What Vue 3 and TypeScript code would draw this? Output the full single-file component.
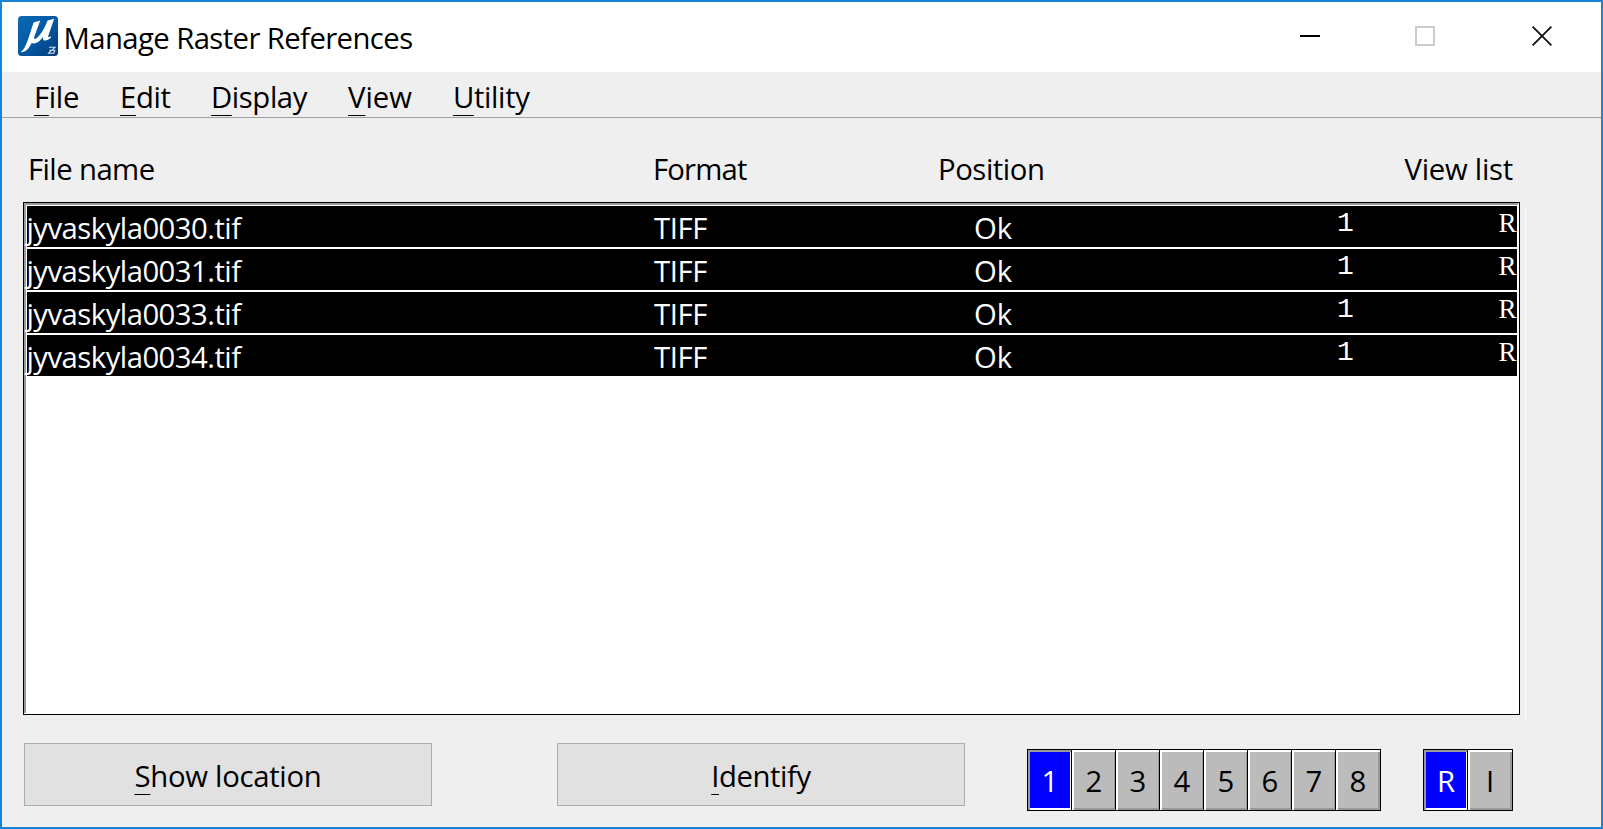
<script setup lang="ts">
import type { Directive } from 'vue'

interface Label {
  key: string
  rest: string
  width: number
}

const menus: Label[] = [
  { key: 'F', rest: 'ile', width: 45 },
  { key: 'E', rest: 'dit', width: 50.5 },
  { key: 'D', rest: 'isplay', width: 96 },
  { key: 'V', rest: 'iew', width: 64 },
  { key: 'U', rest: 'tility', width: 76.5 },
]

const files: string[] = [
  'jyvaskyla0030.tif',
  'jyvaskyla0031.tif',
  'jyvaskyla0033.tif',
  'jyvaskyla0034.tif',
]

const actions: Label[] = [
  { key: 'S', rest: 'how location', width: 187 },
  { key: 'I', rest: 'dentify', width: 99.5 },
]

const views: string[] = ['1', '2', '3', '4', '5', '6', '7', '8']
const modes: string[] = ['R', 'I']

// Tracks a label out or in so that it takes the given advance width.
const vFit: Directive<HTMLElement, number> = {
  mounted(el, binding) {
    const natural = el.getBoundingClientRect().width
    const count = (el.textContent ?? '').length
    el.style.letterSpacing = `${(binding.value - natural) / count}px`
  },
}
</script>

<template>
  <div class="window">
    <header class="titlebar">
      <svg class="logo" width="40" height="40" viewBox="0 0 40 40">
        <defs>
          <linearGradient id="logo-fill" x1="0" y1="0" x2="1" y2="1">
            <stop offset="0" stop-color="#0a6ab4" />
            <stop offset="0.5" stop-color="#0459a3" />
            <stop offset="1" stop-color="#043c7c" />
          </linearGradient>
        </defs>
        <rect width="40" height="40" rx="3.5" fill="url(#logo-fill)" />
        <path d="M15.6 6.4 22.2 4.6 16.4 20.5C15.6 23 16.6 23.6 18.6 22.2 22.8 19.2 27 11.4 29.6 4.6L36.2 2.8 30.4 19.4C29.8 21.4 30.4 21.6 32.8 20.2L33 21.4C29.8 24.8 24 26.4 25 20.9 21.8 25.4 17 28.8 13.6 27 10.8 33 7.2 36.6 2.6 36.2 6.4 33.4 9 26.6 11 20.4Z" fill="#fff" />
        <path d="M31 31.2H37L34 34.2H36.8L35.8 37.2H30.6L33.6 34.2H31.4" fill="none" stroke="#d4e0ee" stroke-width="1.1" />
      </svg>
      <h1 class="title"><span v-fit="349">Manage Raster References</span></h1>
      <div class="controls">
        <svg width="20" height="20" viewBox="0 0 20 20"><path d="M0 10H20" stroke="#000" stroke-width="2" /></svg>
        <svg width="20" height="20" viewBox="0 0 20 20"><rect x="1" y="1" width="18" height="18" fill="none" stroke="#ccc" stroke-width="2" /></svg>
        <svg width="20" height="20" viewBox="0 0 20 20"><path d="M.6 .6 19.4 19.4M19.4 .6 .6 19.4" stroke="#111" stroke-width="1.8" /></svg>
      </div>
    </header>

    <nav class="menubar">
      <div v-for="m in menus" :key="m.key" class="menu">
        <span v-fit="m.width"><u>{{ m.key }}</u>{{ m.rest }}</span>
      </div>
    </nav>

    <div class="headings">
      <div><span v-fit="126.5">File name</span></div>
      <div><span v-fit="93.5">Format</span></div>
      <div><span v-fit="106.5">Position</span></div>
      <div><span v-fit="108.5">View list</span></div>
    </div>

    <div class="list-area">
      <div class="list">
        <div class="well">
          <div v-for="f in files" :key="f" class="row">
            <div class="name"><span v-fit="214">{{ f }}</span></div>
            <div><span v-fit="53">TIFF</span></div>
            <div><span v-fit="38">Ok</span></div>
            <div class="view">1</div>
            <div class="mode">R</div>
          </div>
        </div>
      </div>
      <div class="groove"></div>
    </div>

    <footer class="footer">
      <button v-for="a in actions" :key="a.key" class="action">
        <span v-fit="a.width"><u>{{ a.key }}</u>{{ a.rest }}</span>
      </button>
      <div class="toggles views">
        <div v-for="(v, i) in views" :key="v" class="toggle" :class="{ on: i === 0 }">{{ v }}</div>
      </div>
      <div class="toggles modes">
        <div v-for="(m, i) in modes" :key="m" class="toggle" :class="{ on: i === 0 }">{{ m }}</div>
      </div>
    </footer>
  </div>
</template>

<style>
body {
  margin: 0;
  overflow: hidden;
}
</style>

<style scoped>
.window {
  box-sizing: border-box;
  width: 1603px;
  height: 829px;
  border: 2px solid #1883d7;
  background: #efefef;
  color: #000;
  font-family: "Open Sans", "Noto Sans", sans-serif;
  font-size: 29.3px;
  line-height: 40px;
  white-space: nowrap;
  display: flex;
  flex-direction: column;
}
u {
  text-decoration: underline;
  text-decoration-thickness: 1px;
  text-underline-offset: 7px;
  text-decoration-skip-ink: none;
}
.menubar u {
  text-underline-offset: 6.5px;
}
.titlebar {
  height: 70px;
  box-sizing: border-box;
  padding: 0 49px 0 16px;
  background: #fff;
  display: flex;
  align-items: center;
}
.logo {
  display: block;
  margin-top: -2px;
}
.title {
  margin: 1px 0 0 5.5px;
  font-size: inherit;
  font-weight: 400;
}
.controls {
  margin: -2px 0 0 auto;
  display: flex;
  gap: 96px;
}
.controls svg {
  display: block;
}
.controls svg:nth-child(2) {
  margin-left: -1px;
}
.controls svg:nth-child(3) {
  margin-left: 1px;
}
.menubar {
  height: 46px;
  box-sizing: border-box;
  padding: 5px 0 0 32px;
  border-bottom: 1px solid #a0a0a0;
  display: grid;
  grid-template-columns: 86px 91px 137px 105px auto;
}
.headings {
  margin: 31px 0 0 26px;
  height: 53px;
  display: grid;
  grid-template-columns: 625px 285px 466.5px auto;
}
.list-area {
  padding-left: 21px;
  height: 518px;
  display: flex;
}
.list {
  width: 1497px;
  height: 513px;
  box-sizing: border-box;
  border: 1px solid #000;
  background: #fff;
}
.well {
  width: 1491px;
  height: 507px;
  border-top: 2px solid #9b9b9b;
  border-left: 2px solid #9b9b9b;
  padding: 1px 0 0 1px;
}
.row {
  width: 1490px;
  height: 41px;
  margin-bottom: 2px;
  background: #000;
  color: #fff;
  display: grid;
  grid-template-columns: 627px 320px 363px 161.5px 18px;
  line-height: 45px;
}
.name {
  margin-left: -0.5px;
}
.view {
  font: 28px/35px "Liberation Mono", monospace;
}
.mode {
  font: 27px/34px "Liberation Serif", serif;
}
.groove {
  width: 1px;
  height: 512px;
  margin: 6px 0 0 5px;
  background: #fff;
}
.footer {
  padding: 23px 0 0 22px;
  display: flex;
}
.action {
  width: 408px;
  height: 63px;
  margin: 0 125px 0 0;
  padding: 2px 0 0;
  box-sizing: border-box;
  border: 1px solid #adadad;
  border-radius: 0;
  background: #e1e1e1;
  color: #000;
  font: inherit;
}
.action + .action {
  margin-right: 62px;
}
.toggles {
  display: flex;
  margin-top: 6px;
}
.modes {
  margin-left: 42px;
}
.toggle {
  width: 46px;
  height: 62px;
  margin-right: -2px;
  box-sizing: border-box;
  border: 1px solid #000;
  background: #bbb;
  box-shadow: inset 2px 2px #fff, inset -2px -2px #999;
  line-height: 62px;
  text-align: center;
}
.toggle:last-child {
  margin-right: 0;
}
.toggle.on {
  background: #00f;
  box-shadow: inset 2px 2px #999, inset -2px -2px #fff;
  color: #fff;
}
</style>
